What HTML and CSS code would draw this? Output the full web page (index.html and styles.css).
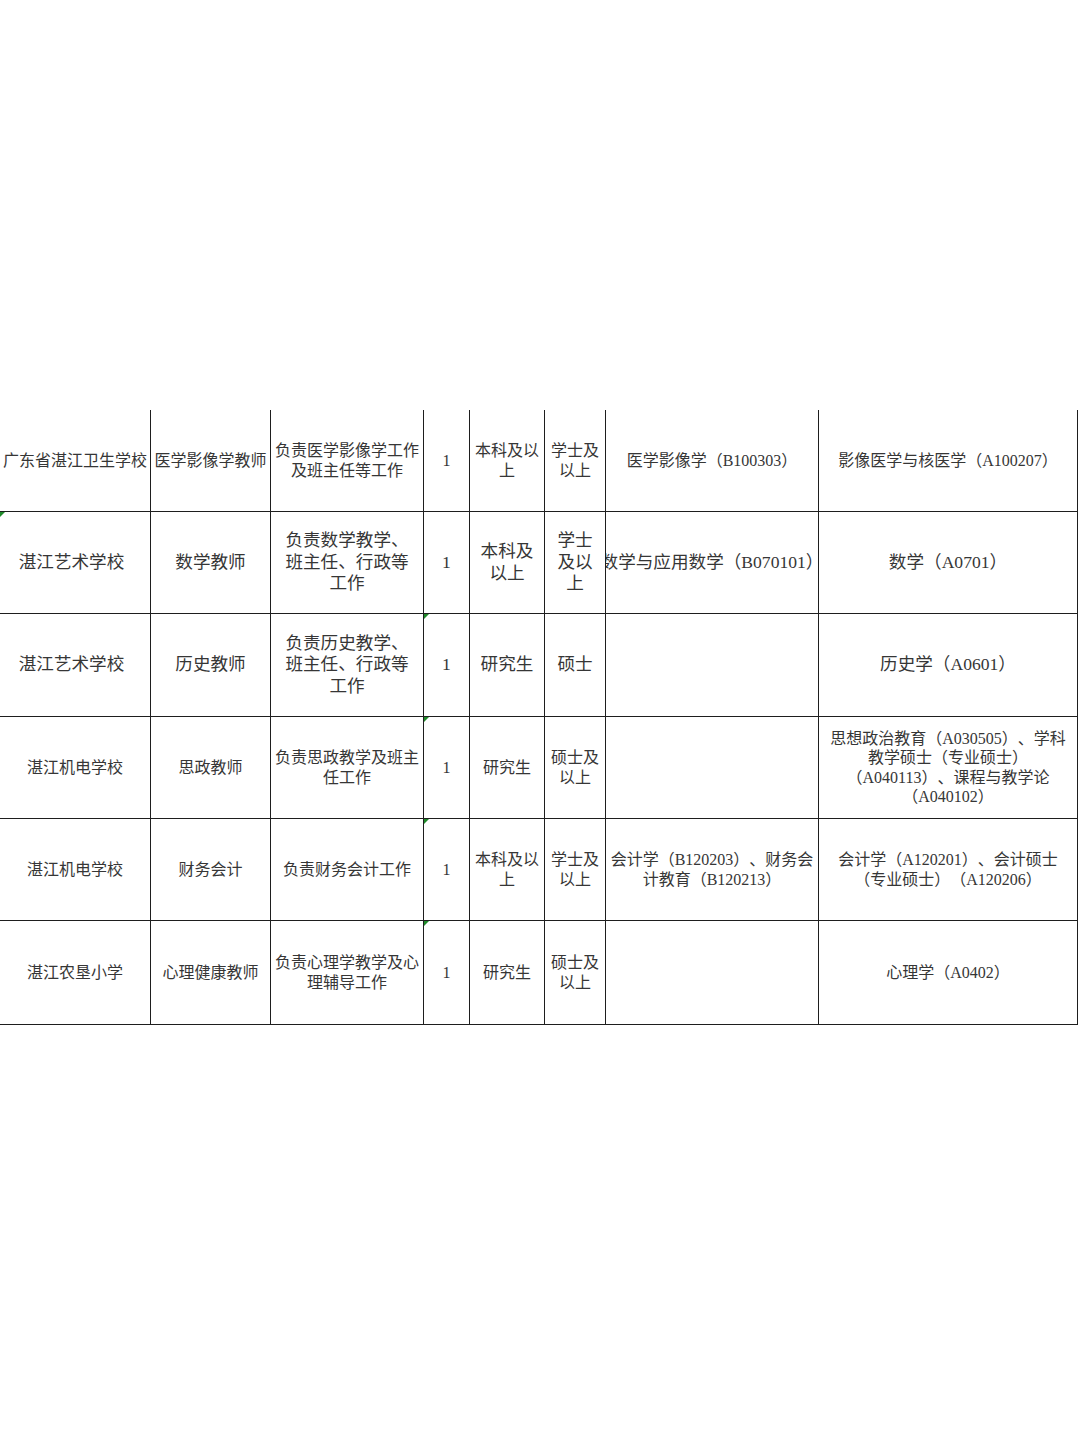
FILE: index.html
```html
<!DOCTYPE html>
<html lang="zh-CN">
<head>
<meta charset="utf-8">
<title>招聘岗位表</title>
<link rel="stylesheet" href="styles.css">
</head>
<body>
<div class="page">
  <div class="sheet">
    <!-- row 1 -->
    <div class="cell r-s">广东省湛江卫生学校</div>
    <div class="cell r-s">医学影像学教师</div>
    <div class="cell r-s">负责医学影像学工作<br>及班主任等工作</div>
    <div class="cell r-s">1</div>
    <div class="cell r-s">本科及以<br>上</div>
    <div class="cell r-s">学士及<br>以上</div>
    <div class="cell r-s">医学影像学（B100303）</div>
    <div class="cell r-s">影像医学与核医学（A100207）</div>

    <!-- row 2 -->
    <div class="cell r-l flag first">湛江艺术学校</div>
    <div class="cell r-l">数学教师</div>
    <div class="cell r-l">负责数学教学、<br>班主任、行政等<br>工作</div>
    <div class="cell r-l">1</div>
    <div class="cell r-l">本科及<br>以上</div>
    <div class="cell r-l">学士<br>及以<br>上</div>
    <div class="cell r-l clip">数学与应用数学（B070101）</div>
    <div class="cell r-l">数学（A0701）</div>

    <!-- row 3 -->
    <div class="cell r-l first">湛江艺术学校</div>
    <div class="cell r-l">历史教师</div>
    <div class="cell r-l">负责历史教学、<br>班主任、行政等<br>工作</div>
    <div class="cell r-l flag">1</div>
    <div class="cell r-l">研究生</div>
    <div class="cell r-l">硕士</div>
    <div class="cell r-l"></div>
    <div class="cell r-l">历史学（A0601）</div>

    <!-- row 4 -->
    <div class="cell r-s">湛江机电学校</div>
    <div class="cell r-s">思政教师</div>
    <div class="cell r-s">负责思政教学及班主<br>任工作</div>
    <div class="cell r-s flag">1</div>
    <div class="cell r-s">研究生</div>
    <div class="cell r-s">硕士及<br>以上</div>
    <div class="cell r-s"></div>
    <div class="cell r-s">思想政治教育（A030505）、学科<br>教学硕士（专业硕士）<br>（A040113）、课程与教学论<br>（A040102）</div>

    <!-- row 5 -->
    <div class="cell r-s">湛江机电学校</div>
    <div class="cell r-s">财务会计</div>
    <div class="cell r-s">负责财务会计工作</div>
    <div class="cell r-s flag">1</div>
    <div class="cell r-s">本科及以<br>上</div>
    <div class="cell r-s">学士及<br>以上</div>
    <div class="cell r-s">会计学（B120203）、财务会<br>计教育（B120213）</div>
    <div class="cell r-s">会计学（A120201）、会计硕士<br>（专业硕士）（A120206）</div>

    <!-- row 6 -->
    <div class="cell r-s">湛江农垦小学</div>
    <div class="cell r-s">心理健康教师</div>
    <div class="cell r-s">负责心理学教学及心<br>理辅导工作</div>
    <div class="cell r-s flag">1</div>
    <div class="cell r-s">研究生</div>
    <div class="cell r-s">硕士及<br>以上</div>
    <div class="cell r-s"></div>
    <div class="cell r-s">心理学（A0402）</div>
  </div>
</div>
</body>
</html>
```
FILE: styles.css
```css
html, body {
  margin: 0;
  padding: 0;
  background: #ffffff;
}

.page {
  width: 1080px;
  height: 1440px;
  padding-top: 410px;
  box-sizing: border-box;
  background: #ffffff;
}

.sheet {
  display: grid;
  grid-template-columns: 151px 120px 153px 46px 75px 61px 213px 259px;
  grid-template-rows: 102px 102px 103px 102px 102px 104px;
  width: 1078px;
  font-family: "Liberation Serif", "Noto Sans CJK SC", serif;
  color: #363636;
  text-spacing-trim: space-all;
}

.cell {
  position: relative;
  display: flex;
  align-items: center;
  justify-content: center;
  text-align: center;
  white-space: nowrap;
  overflow: hidden;
  border-right: 1px solid #1e1e1e;
  border-bottom: 1px solid #1e1e1e;
  box-sizing: border-box;
  padding: 0 1px;
  text-spacing-trim: space-all;
}

.r-s {
  font-size: 16px;
  line-height: 19.5px;
}

.r-l {
  font-size: 17.6px;
  line-height: 21.5px;
}

.first {
  padding-right: 8px;
}

.clip {
  padding: 0;
}

.flag::before {
  content: "";
  position: absolute;
  left: 0;
  top: 0;
  width: 0;
  height: 0;
  border-top: 5px solid #1f8a2a;
  border-right: 5px solid transparent;
}
```
